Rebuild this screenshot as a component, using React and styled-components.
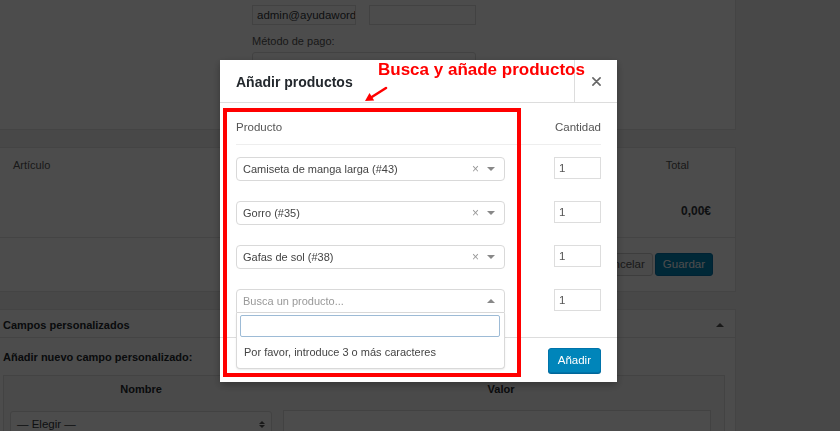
import React from 'react';
import styled, { createGlobalStyle } from 'styled-components';

const GlobalStyle = createGlobalStyle`
  html, body {
    margin: 0;
    padding: 0;
    background: #f1f1f1;
    font-family: "Liberation Sans", Arial, sans-serif;
    overflow: hidden;
  }
  * { box-sizing: border-box; }
`;

/* ---------- background admin page ---------- */

const Page = styled.div`
  width: 840px;
  height: 431px;
  overflow: hidden;
`;

const Column = styled.div`
  width: 736px;
  display: flex;
  flex-direction: column;
  gap: 17px;
`;

const Panel = styled.div`
  background: #fff;
  border: 1px solid #e5e5e5;
  border-left: none;
`;

const OrderPanel = styled(Panel)`
  height: 130px;
  border-top: none;
  padding: 5px 0 0 252px;
  display: flex;
  flex-direction: column;
`;

const FieldRow = styled.div`
  display: flex;
  gap: 13px;
`;

const TextField = styled.div`
  width: ${p => p.$w}px;
  height: 20px;
  border: 1px solid #ddd;
  background: #fff;
  padding: 0 4px;
  font-size: 11.5px;
  line-height: 18px;
  color: #32373c;
  white-space: nowrap;
  overflow: hidden;
`;

const FieldLabel = styled.div`
  margin-top: 9px;
  font-size: 11px;
  line-height: 14px;
  color: #555;
`;

const FakeSelect = styled.div`
  margin-top: 4px;
  width: 224px;
  height: 24px;
  border: 1px solid #ddd;
  border-radius: 3px;
  padding: 0 7px;
  font-size: 11.5px;
  line-height: 22px;
  color: #32373c;
`;

const ItemsPanel = styled(Panel)`
  display: flex;
  flex-direction: column;
`;

const ItemsHead = styled.div`
  height: 33px;
  display: flex;
  align-items: center;
  justify-content: space-between;
  padding: 0 46px 0 13px;
  font-size: 11px;
  color: #555;
`;

const ItemsRow = styled.div`
  height: 57px;
  display: flex;
  align-items: center;
  justify-content: flex-end;
  padding: 3px 24px 0 0;
  font-size: 12px;
  font-weight: bold;
  color: #32373c;
  border-bottom: 1px solid #e5e5e5;
`;

const ItemsActions = styled.div`
  height: 53px;
  display: flex;
  justify-content: flex-end;
  align-items: flex-start;
  padding: 15px 22px 0 0;
  gap: 2px;
`;

const WpButton = styled.div`
  height: 23px;
  padding: 0 7px;
  border-radius: 3px;
  font-size: 11.5px;
  line-height: 21px;
  border: 1px solid ${p => (p.$primary ? '#0073aa' : '#ccc')};
  background: ${p => (p.$primary ? '#0085ba' : '#f7f7f7')};
  color: ${p => (p.$primary ? '#fff' : '#555')};
`;

const MetaPanel = styled(Panel)`
  flex: 1;
  border-bottom: none;
`;

const MetaHeader = styled.div`
  height: 28px;
  display: flex;
  align-items: center;
  justify-content: space-between;
  padding: 2px 11px 0 3px;
  border-bottom: 1px solid #e5e5e5;
  font-size: 11px;
  font-weight: bold;
  color: #23282d;
`;

const Triangle = styled.span`
  width: 0;
  height: 0;
  border-left: ${p => p.$size || 4}px solid transparent;
  border-right: ${p => p.$size || 4}px solid transparent;
  ${p => (p.$up ? 'border-bottom' : 'border-top')}: ${p => p.$size || 4}px solid ${p => p.$color || '#888'};
`;

const MetaBody = styled.div`
  padding: 12px 10px 0 3px;
`;

const MetaLabel = styled.div`
  font-size: 11px;
  font-weight: bold;
  line-height: 14px;
  color: #23282d;
`;

const MetaTable = styled.div`
  margin-top: 11px;
  background: #f9f9f9;
  border: 1px solid #e1e1e1;
  display: grid;
  grid-template-columns: 274px 1fr;
`;

const MetaTh = styled.div`
  height: 25px;
  display: flex;
  align-items: center;
  justify-content: center;
  font-size: 11px;
  font-weight: bold;
  color: #23282d;
`;

const MetaCell = styled.div`
  padding: ${p => (p.$right ? '9px 13px 0 5px' : '10px 6px 0 6px')};
`;

const ElegirSelect = styled.div`
  height: 26px;
  border: 1px solid #ddd;
  border-radius: 3px;
  background: #fff;
  display: flex;
  align-items: center;
  justify-content: space-between;
  padding: 0 6px 0 6px;
  font-size: 11.5px;
  color: #32373c;
`;

const UpDown = styled.span`
  display: flex;
  flex-direction: column;
  gap: 1px;
`;

const TextArea = styled.div`
  height: 40px;
  border: 1px solid #ddd;
  background: #fff;
`;

/* ---------- modal ---------- */

const Backdrop = styled.div`
  position: fixed;
  inset: 0;
  background: rgba(0, 0, 0, 0.7);
`;

const Modal = styled.div`
  position: fixed;
  left: 220px;
  top: 60px;
  width: 397px;
  background: #fff;
  box-shadow: 0 3px 8px rgba(0, 0, 0, 0.3);
  display: flex;
  flex-direction: column;
`;

const ModalHeader = styled.div`
  height: 43px;
  display: flex;
  align-items: stretch;
  border-bottom: 1px solid #ddd;
`;

const ModalTitle = styled.h1`
  flex: 1;
  margin: 0;
  padding: 1px 0 0 16px;
  display: flex;
  align-items: center;
  font-size: 14px;
  font-weight: bold;
  color: #23282d;
`;

const CloseButton = styled.div`
  width: 43px;
  border-left: 1px solid #ddd;
  display: flex;
  align-items: center;
  justify-content: center;
`;

const ModalBody = styled.div`
  padding: 7px 16px 14px;
`;

const TableHead = styled.div`
  height: 35px;
  display: grid;
  grid-template-columns: 269px 1fr;
  align-items: center;
  border-bottom: 1px solid #eee;
  font-size: 11.5px;
  color: #555;
`;

const HeadRight = styled.div`
  text-align: right;
`;

const Rows = styled.div`
  padding-top: 2px;
`;

const Row = styled.div`
  padding: 10px 0;
  display: grid;
  grid-template-columns: 269px 1fr;
  align-items: start;
`;

const ProductSelect = styled.div`
  position: relative;
  height: 24px;
  border: 1px solid #d9d9d9;
  border-radius: ${p => (p.$open ? '4px 4px 0 0' : '4px')};
  display: flex;
  align-items: center;
  padding: 0 9px 0 6px;
  font-size: 11px;
  color: ${p => (p.$placeholder ? '#999' : '#444')};
`;

const SelectText = styled.span`
  flex: 1;
`;

const ClearMark = styled.span`
  color: #999;
  font-size: 12px;
  margin-right: 8px;
`;

const Dropdown = styled.div`
  position: absolute;
  z-index: 2;
  left: -1px;
  right: -1px;
  top: 23px;
  background: #fff;
  border: 1px solid #d9d9d9;
  border-top: none;
  border-radius: 0 0 4px 4px;
  box-shadow: 0 1px 2px rgba(0, 0, 0, 0.08);
  padding: 2px 4px 0 3px;
`;

const SearchInput = styled.div`
  height: 22px;
  border: 1px solid #9dbbd6;
  border-radius: 2px;
`;

const DropdownMessage = styled.div`
  padding: 8px 4px 8px 4px;
  font-size: 11px;
  line-height: 15px;
  color: #444;
`;

const QtyCell = styled.div`
  display: flex;
  justify-content: flex-end;
`;

const QtyInput = styled.div`
  width: 47px;
  height: 22px;
  border: 1px solid #ddd;
  padding: 0 4px;
  font-size: 11.5px;
  line-height: 20px;
  color: #555;
`;

const ModalFooter = styled.div`
  height: 45px;
  border-top: 1px solid #ddd;
  display: flex;
  align-items: center;
  justify-content: flex-end;
  padding: 0 16px;
`;

const AddButton = styled.div`
  height: 25px;
  padding: 0 9px;
  border-radius: 3px;
  background: #0085ba;
  border: 1px solid #0073aa;
  box-shadow: 0 1px 0 #006799;
  color: #fff;
  font-size: 11.5px;
  line-height: 23px;
`;

/* ---------- annotation drawn over the modal ---------- */

const Highlight = styled.div`
  position: absolute;
  left: 3px;
  top: 48px;
  width: 298px;
  height: 269px;
  border: 4px solid #ff0000;
  pointer-events: none;
`;

const Callout = styled.div`
  position: absolute;
  left: 158px;
  top: 1px;
  font-size: 17px;
  line-height: 17px;
  font-weight: bold;
  color: #ff0000;
  white-space: nowrap;
`;

const CalloutArrow = styled.svg`
  position: absolute;
  left: 140px;
  top: 24px;
`;

const products = [
  'Camiseta de manga larga (#43)',
  'Gorro (#35)',
  'Gafas de sol (#38)',
];

const App = () => {
  return (
    <>
      <GlobalStyle />
      <Page>
        <Column>
          <OrderPanel>
            <FieldRow>
              <TextField $w={104}>admin@ayudaword</TextField>
              <TextField $w={107} />
            </FieldRow>
            <FieldLabel>Método de pago:</FieldLabel>
            <FakeSelect>PayPal</FakeSelect>
          </OrderPanel>

          <ItemsPanel>
            <ItemsHead>
              <span>Artículo</span>
              <span>Total</span>
            </ItemsHead>
            <ItemsRow>0,00€</ItemsRow>
            <ItemsActions>
              <WpButton>Cancelar</WpButton>
              <WpButton $primary>Guardar</WpButton>
            </ItemsActions>
          </ItemsPanel>

          <MetaPanel>
            <MetaHeader>
              <span>Campos personalizados</span>
              <Triangle $up $color="#555" />
            </MetaHeader>
            <MetaBody>
              <MetaLabel>Añadir nuevo campo personalizado:</MetaLabel>
              <MetaTable>
                <MetaTh>Nombre</MetaTh>
                <MetaTh>Valor</MetaTh>
                <MetaCell>
                  <ElegirSelect>
                    <span>— Elegir —</span>
                    <UpDown>
                      <Triangle $up $size={3} $color="#555" />
                      <Triangle $size={3} $color="#555" />
                    </UpDown>
                  </ElegirSelect>
                </MetaCell>
                <MetaCell $right>
                  <TextArea />
                </MetaCell>
              </MetaTable>
            </MetaBody>
          </MetaPanel>
        </Column>
      </Page>

      <Backdrop />

      <Modal>
        <ModalHeader>
          <ModalTitle>Añadir productos</ModalTitle>
          <CloseButton>
            <svg width="9" height="9" viewBox="0 0 10 10">
              <path d="M1 1 L9 9 M9 1 L1 9" stroke="#666" strokeWidth="1.8" strokeLinecap="round" />
            </svg>
          </CloseButton>
        </ModalHeader>

        <ModalBody>
          <TableHead>
            <span>Producto</span>
            <HeadRight>Cantidad</HeadRight>
          </TableHead>
          <Rows>
            {products.map(name => (
              <Row key={name}>
                <ProductSelect>
                  <SelectText>{name}</SelectText>
                  <ClearMark>×</ClearMark>
                  <Triangle />
                </ProductSelect>
                <QtyCell>
                  <QtyInput>1</QtyInput>
                </QtyCell>
              </Row>
            ))}
            <Row>
              <ProductSelect $open $placeholder>
                <SelectText>Busca un producto...</SelectText>
                <Triangle $up />
                <Dropdown>
                  <SearchInput />
                  <DropdownMessage>Por favor, introduce 3 o más caracteres</DropdownMessage>
                </Dropdown>
              </ProductSelect>
              <QtyCell>
                <QtyInput>1</QtyInput>
              </QtyCell>
            </Row>
          </Rows>
        </ModalBody>

        <ModalFooter>
          <AddButton>Añadir</AddButton>
        </ModalFooter>

        <Highlight />
        <Callout>Busca y añade productos</Callout>
        <CalloutArrow width="30" height="20" viewBox="0 0 30 20">
          <path d="M26 4 L11 13.5" stroke="#ff0000" strokeWidth="2.6" strokeLinecap="round" />
          <path d="M5 17 L14.2 16.4 L9.5 9 Z" fill="#ff0000" />
        </CalloutArrow>
      </Modal>
    </>
  );
};

export default App;
